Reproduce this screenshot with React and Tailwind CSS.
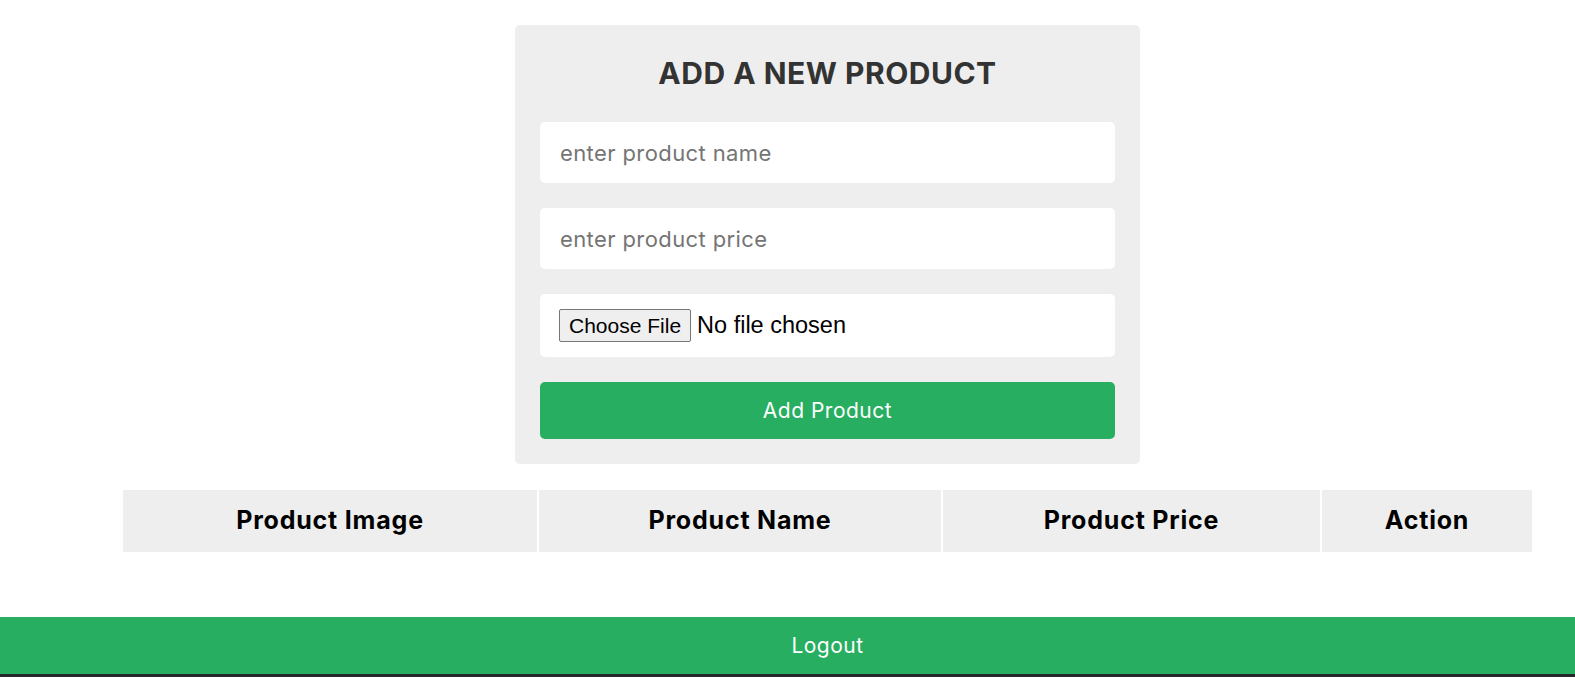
import React from "react";

const columns = [
  { label: "Product Image", width: "w-[414px]" },
  { label: "Product Name", width: "w-[402px]" },
  { label: "Product Price", width: "w-[377px]" },
  { label: "Action", width: "w-[210px]" },
];

const App = () => {
  return (
    <div className="min-h-screen bg-white font-['Inter',sans-serif]">
      <div className="pl-[80px]">
        {/* add product form */}
        <section className="w-[625px] mx-auto mt-[25px] rounded-[5px] bg-[#eeeeee] p-[25px]">
          <h3 className="text-center text-[30px] leading-[47px] tracking-[0.5px] font-bold uppercase text-[#333333] mb-[25px]">
            Add a new product
          </h3>
          <div className="flex flex-col gap-[25px]">
            <input
              type="text"
              placeholder="enter product name"
              className="block w-full h-[61px] rounded-[5px] bg-white px-[20px] text-[22px] tracking-[0.4px] text-[#333] placeholder:text-[#757575] outline-none"
            />
            <input
              type="number"
              placeholder="enter product price"
              className="block w-full h-[61px] rounded-[5px] bg-white px-[20px] text-[22px] tracking-[0.4px] text-[#333] placeholder:text-[#757575] outline-none"
            />
            <div className="flex items-center h-[63px] rounded-[5px] bg-white px-[19px]">
              <input
                type="file"
                className="font-['Liberation_Sans',Arial,sans-serif] text-[23.5px] text-black file:mr-[6px] file:rounded-[2px] file:border file:border-[#767676] file:bg-[#efefef] file:px-[9px] file:py-0 file:h-[33px] file:text-[21px] file:text-black"
              />
            </div>
            <button className="w-full h-[57px] rounded-[5px] bg-[#27ae60] text-white text-[21px] tracking-[0.5px]">
              Add Product
            </button>
          </div>
        </section>

        {/* products table */}
        <div className="w-[1413px] mx-auto mt-[24px]">
          <table className="w-full border-separate border-spacing-[2px] table-fixed">
            <thead>
              <tr>
                {columns.map((col) => (
                  <th
                    key={col.label}
                    className={`${col.width} h-[62px] bg-[#eeeeee] text-center text-[25px] tracking-[0.8px] font-bold text-black`}
                  >
                    {col.label}
                  </th>
                ))}
              </tr>
            </thead>
            <tbody></tbody>
          </table>
        </div>
      </div>

      <div className="mt-[63px] h-[57px] bg-[#27ae60] pl-[80px] flex items-center justify-center">
        <span className="text-white text-[21px] tracking-[0.5px]">Logout</span>
      </div>
      <div className="h-[20px] bg-[#27272a]"></div>
    </div>
  );
};

export default App;
